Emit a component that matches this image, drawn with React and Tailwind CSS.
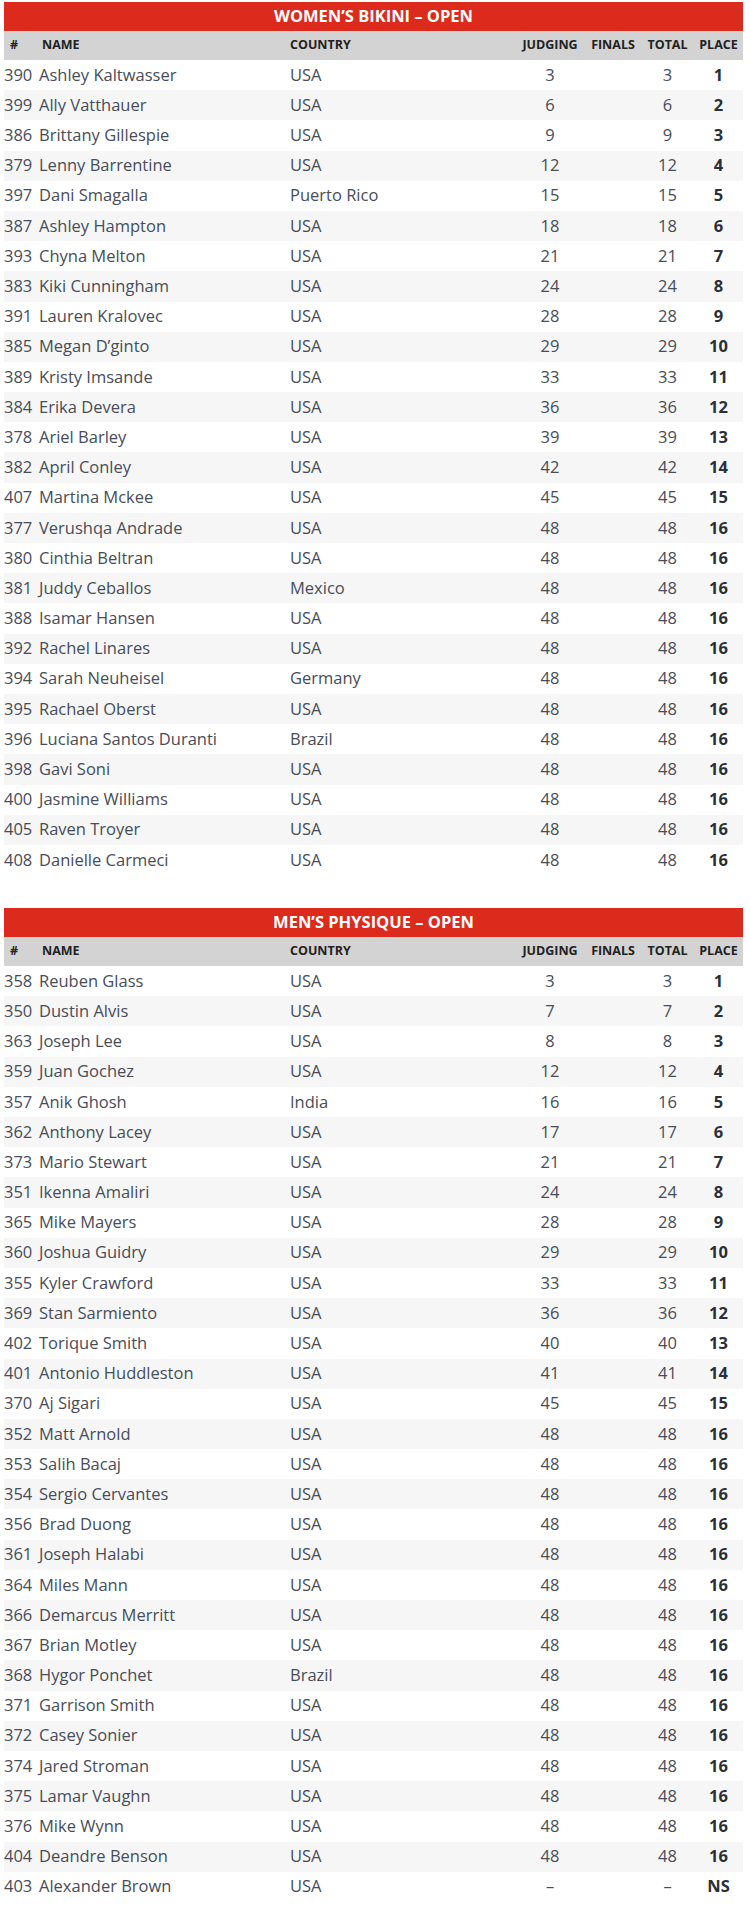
import React from "react"

const bikini = [
  ["390", "Ashley Kaltwasser", "USA", "3", "3", "1"],
  ["399", "Ally Vatthauer", "USA", "6", "6", "2"],
  ["386", "Brittany Gillespie", "USA", "9", "9", "3"],
  ["379", "Lenny Barrentine", "USA", "12", "12", "4"],
  ["397", "Dani Smagalla", "Puerto Rico", "15", "15", "5"],
  ["387", "Ashley Hampton", "USA", "18", "18", "6"],
  ["393", "Chyna Melton", "USA", "21", "21", "7"],
  ["383", "Kiki Cunningham", "USA", "24", "24", "8"],
  ["391", "Lauren Kralovec", "USA", "28", "28", "9"],
  ["385", "Megan D’ginto", "USA", "29", "29", "10"],
  ["389", "Kristy Imsande", "USA", "33", "33", "11"],
  ["384", "Erika Devera", "USA", "36", "36", "12"],
  ["378", "Ariel Barley", "USA", "39", "39", "13"],
  ["382", "April Conley", "USA", "42", "42", "14"],
  ["407", "Martina Mckee", "USA", "45", "45", "15"],
  ["377", "Verushqa Andrade", "USA", "48", "48", "16"],
  ["380", "Cinthia Beltran", "USA", "48", "48", "16"],
  ["381", "Juddy Ceballos", "Mexico", "48", "48", "16"],
  ["388", "Isamar Hansen", "USA", "48", "48", "16"],
  ["392", "Rachel Linares", "USA", "48", "48", "16"],
  ["394", "Sarah Neuheisel", "Germany", "48", "48", "16"],
  ["395", "Rachael Oberst", "USA", "48", "48", "16"],
  ["396", "Luciana Santos Duranti", "Brazil", "48", "48", "16"],
  ["398", "Gavi Soni", "USA", "48", "48", "16"],
  ["400", "Jasmine Williams", "USA", "48", "48", "16"],
  ["405", "Raven Troyer", "USA", "48", "48", "16"],
  ["408", "Danielle Carmeci", "USA", "48", "48", "16"],
]

const physique = [
  ["358", "Reuben Glass", "USA", "3", "3", "1"],
  ["350", "Dustin Alvis", "USA", "7", "7", "2"],
  ["363", "Joseph Lee", "USA", "8", "8", "3"],
  ["359", "Juan Gochez", "USA", "12", "12", "4"],
  ["357", "Anik Ghosh", "India", "16", "16", "5"],
  ["362", "Anthony Lacey", "USA", "17", "17", "6"],
  ["373", "Mario Stewart", "USA", "21", "21", "7"],
  ["351", "Ikenna Amaliri", "USA", "24", "24", "8"],
  ["365", "Mike Mayers", "USA", "28", "28", "9"],
  ["360", "Joshua Guidry", "USA", "29", "29", "10"],
  ["355", "Kyler Crawford", "USA", "33", "33", "11"],
  ["369", "Stan Sarmiento", "USA", "36", "36", "12"],
  ["402", "Torique Smith", "USA", "40", "40", "13"],
  ["401", "Antonio Huddleston", "USA", "41", "41", "14"],
  ["370", "Aj Sigari", "USA", "45", "45", "15"],
  ["352", "Matt Arnold", "USA", "48", "48", "16"],
  ["353", "Salih Bacaj", "USA", "48", "48", "16"],
  ["354", "Sergio Cervantes", "USA", "48", "48", "16"],
  ["356", "Brad Duong", "USA", "48", "48", "16"],
  ["361", "Joseph Halabi", "USA", "48", "48", "16"],
  ["364", "Miles Mann", "USA", "48", "48", "16"],
  ["366", "Demarcus Merritt", "USA", "48", "48", "16"],
  ["367", "Brian Motley", "USA", "48", "48", "16"],
  ["368", "Hygor Ponchet", "Brazil", "48", "48", "16"],
  ["371", "Garrison Smith", "USA", "48", "48", "16"],
  ["372", "Casey Sonier", "USA", "48", "48", "16"],
  ["374", "Jared Stroman", "USA", "48", "48", "16"],
  ["375", "Lamar Vaughn", "USA", "48", "48", "16"],
  ["376", "Mike Wynn", "USA", "48", "48", "16"],
  ["404", "Deandre Benson", "USA", "48", "48", "16"],
  ["403", "Alexander Brown", "USA", "–", "–", "NS"],
]

const cols = "grid grid-cols-[35px_251px_225px_70px_56px_53px_49px]"

function Results({ title, rows }) {
  return (
    <div className="w-[739px]">
      <div className="h-[29px] bg-[#dc2a1c] flex items-center justify-center text-white font-bold text-[16.5px]">
        {title}
      </div>
      <div className={`${cols} h-[29px] items-center bg-[#d3d3d3] text-[#222] font-bold text-[12.5px]`}>
        <div className="pl-[6px]">#</div>
        <div className="pl-[3px]">NAME</div>
        <div>COUNTRY</div>
        <div className="text-center">JUDGING</div>
        <div className="text-center">FINALS</div>
        <div className="text-center">TOTAL</div>
        <div className="text-center">PLACE</div>
      </div>
      {rows.map((r, i) => (
        <div
          key={r[0]}
          className={`${cols} h-[30.2px] items-center text-[16.5px] text-[#474d59] ${i % 2 === 1 ? "bg-[#f6f6f6]" : "bg-white"}`}
        >
          <div>{r[0]}</div>
          <div>{r[1]}</div>
          <div>{r[2]}</div>
          <div className="text-center">{r[3]}</div>
          <div className="text-center"></div>
          <div className="text-center">{r[4]}</div>
          <div className="text-center font-bold text-[#2b2f36]">{r[5]}</div>
        </div>
      ))}
    </div>
  )
}

export default function App() {
  return (
    <div className="w-[750px] min-h-[1920px] bg-white pl-[4px] pt-[2px] font-['Open_Sans',sans-serif]">
      <Results title="WOMEN’S BIKINI – OPEN" rows={bikini} />
      <div className="h-[33px]" />
      <Results title="MEN’S PHYSIQUE – OPEN" rows={physique} />
    </div>
  )
}
